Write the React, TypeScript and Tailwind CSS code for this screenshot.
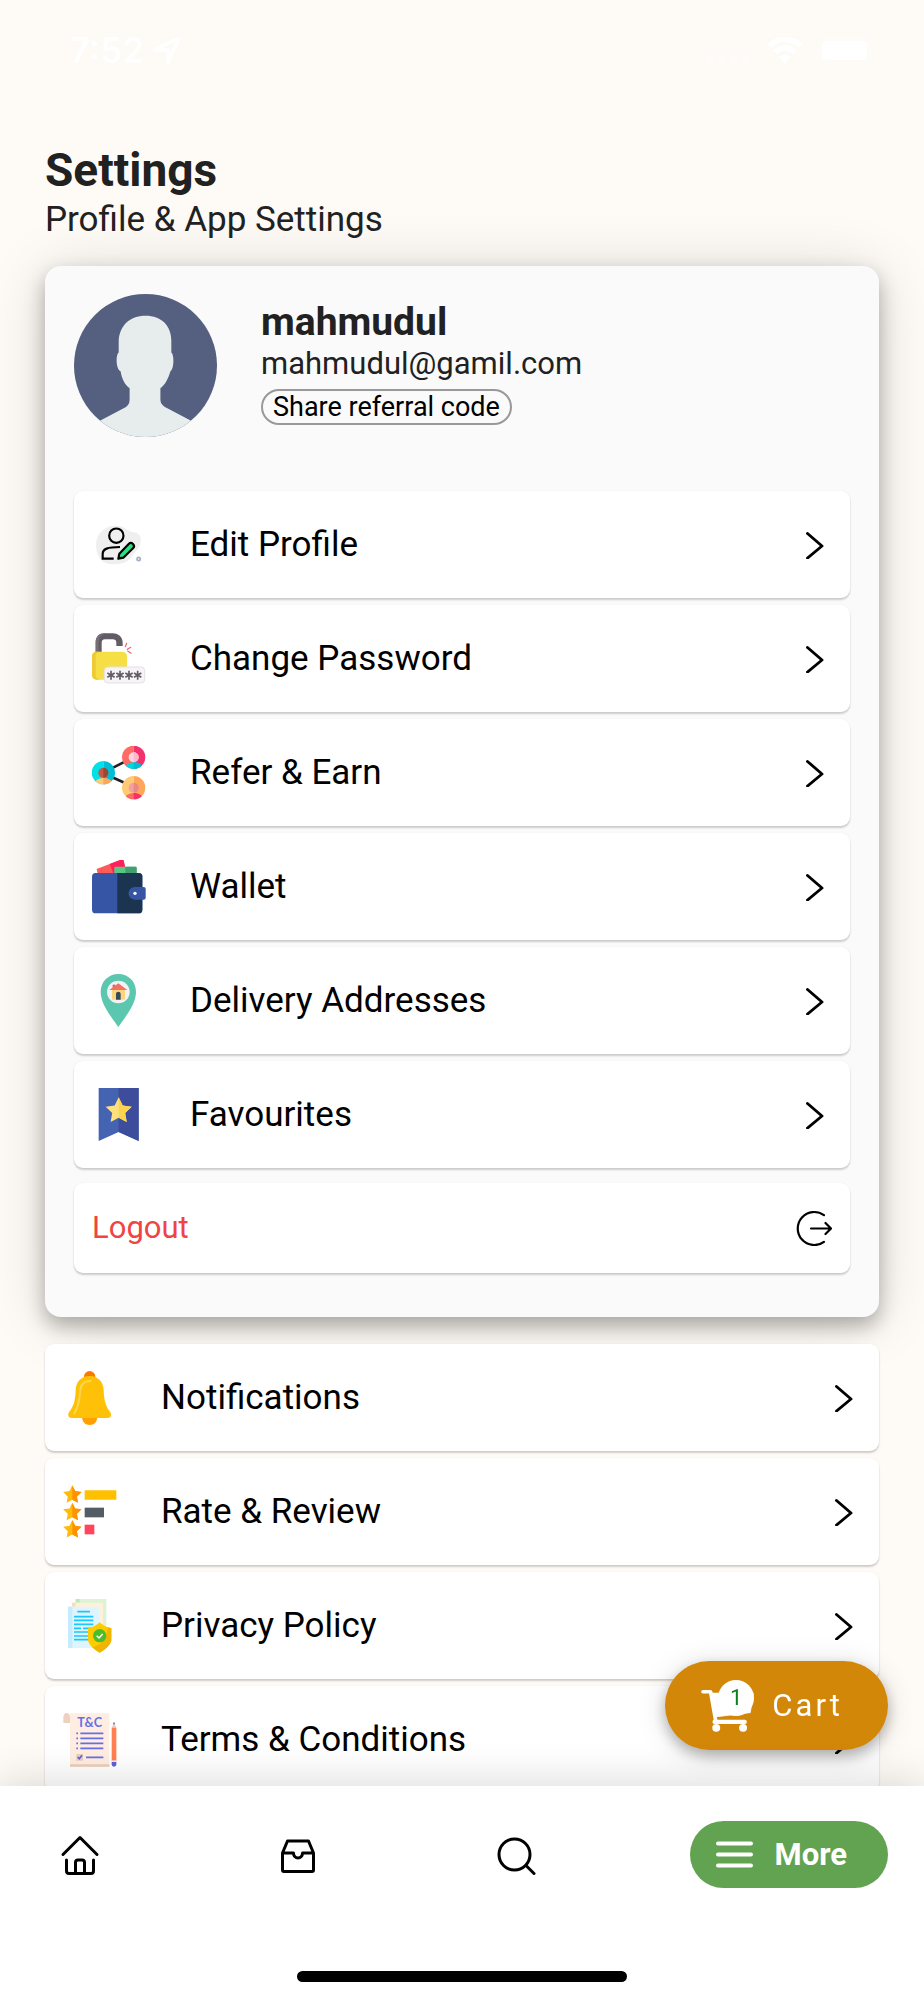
import type { ReactNode } from "react";

const star = (cx: number, cy: number, r: number, inner = 0.48) =>
  Array.from({ length: 10 }, (_, i) => {
    const a = (Math.PI / 5) * i - Math.PI / 2;
    const d = i % 2 === 0 ? r : r * inner;
    return `${(cx + d * Math.cos(a)).toFixed(1)},${(cy + d * Math.sin(a)).toFixed(1)}`;
  }).join(" ");

const rightHalf = (cx: number, cy: number, r: number, inner = 0.48) =>
  star(cx, cy, r, inner).split(" ").slice(0, 6).join(" ");

function Icon({ viewBox, children }: { viewBox: string; children: ReactNode }) {
  return (
    <svg viewBox={viewBox} className="size-[54px] shrink-0" fill="none" aria-hidden="true">
      {children}
    </svg>
  );
}

const EditProfileIcon = () => (
  <Icon viewBox="96 113 162 162">
    <path d="M108 196C107 160 136 134 170 136C196 137 198 152 222 156C242 159 246 176 240 194C234 212 222 216 214 230C202 248 182 252 160 252C126 252 109 230 108 196Z" fill="#efefef" />
    <circle cx="169" cy="166" r="21.500" stroke="#000" strokeWidth="6.500" />
    <path d="M161 235H128V221C128 206 142 200 180 200" stroke="#000" strokeWidth="6.500" />
    <path d="M175 235L178 220L206 191C210 187 215 187 219 191C223 195 223 200 219 204L190 232Z" fill="#2fdf84" stroke="#000" strokeWidth="6.500" strokeLinejoin="round" />
    <circle cx="236" cy="236" r="5" stroke="#a3b0c6" strokeWidth="5" />
  </Icon>
);

const PasswordIcon = () => (
  <Icon viewBox="96 455 162 162">
    <path d="M107 520V486C107 469 118 459 134 459H158C177 459 188 472 188 487V497H169V487C169 480 165 477 158 477H135C128 477 125 481 125 487V520Z" fill="#625c65" />
    <path d="M107 516V486C107 469 118 459 134 459H140C124 462 116 472 116 487V516Z" fill="#746e77" />
    <rect x="96" y="514" width="105" height="84" rx="14" fill="#f5df45" />
    <path d="M110 514H121C112 515 107 519 107 528V585C107 593 112 597 121 598H110C101 598 96 592 96 584V528C96 520 101 514 110 514Z" fill="#f0c936" />
    <path d="M200 489L196 499M212 501L202 507M203 512L213 519" stroke="#ef6470" strokeWidth="3.500" strokeLinecap="round" />
    <rect x="133" y="560" width="121" height="48" rx="11" fill="#f7f4f8" stroke="#e4e0e6" strokeWidth="3" />
    {[153, 180, 207, 233].map((x) => (
      <path key={x} d={`M${x} 571V598M${x - 11} 578L${x + 11} 591M${x + 11} 578L${x - 11} 591`} stroke="#625c65" strokeWidth="5" />
    ))}
  </Icon>
);

const ReferIcon = () => (
  <Icon viewBox="96 107 162 162">
    <defs>
      <clipPath id="refer-left"><circle cx="130" cy="187" r="35" /></clipPath>
      <clipPath id="refer-top"><circle cx="221" cy="141" r="35" /></clipPath>
      <clipPath id="refer-bottom"><circle cx="221" cy="232" r="35" /></clipPath>
    </defs>
    <path d="M155 174L195 154M155 200L195 218" stroke="#241f20" strokeWidth="8" />
    <g clipPath="url(#refer-left)">
      <path d="M95 150H130V224H95Z" fill="#00e1e8" />
      <path d="M130 150H166V224H130Z" fill="#00bed5" />
      <ellipse cx="130" cy="220" rx="27" ry="17" fill="#ffca75" />
      <path d="M130 203C145 203 157 211 157 220V237H130Z" fill="#ffa65a" />
      <circle cx="130" cy="187" r="15" fill="#c45a43" />
      <path d="M130 172A15 15 0 0 1 130 202Z" fill="#9a4836" />
    </g>
    <g clipPath="url(#refer-top)">
      <path d="M186 106H221V178H186Z" fill="#ff6a64" />
      <path d="M221 106H257V178H221Z" fill="#f2336b" />
      <ellipse cx="221" cy="174" rx="27" ry="18" fill="#00d5e0" />
      <path d="M221 156C236 156 248 165 248 174V192H221Z" fill="#00bed5" />
      <circle cx="221" cy="141" r="15" fill="#ffd5e0" />
      <path d="M221 126A15 15 0 0 1 221 156Z" fill="#ffb7cc" />
    </g>
    <g clipPath="url(#refer-bottom)">
      <path d="M186 196H221V268H186Z" fill="#ffca75" />
      <path d="M221 196H257V268H221Z" fill="#ffa65a" />
      <ellipse cx="221" cy="265" rx="27" ry="17" fill="#ff6a64" />
      <path d="M221 248C236 248 248 256 248 265V282H221Z" fill="#f2336b" />
      <circle cx="221" cy="232" r="15" fill="#f5a19b" />
      <path d="M221 217A15 15 0 0 1 221 247Z" fill="#ea8683" />
    </g>
  </Icon>
);

const WalletIcon = () => (
  <Icon viewBox="95 449 162 162">
    <path d="M109 476L182 448Q188 446 190 451L199 492H112Z" fill="#ff5a5a" />
    <path d="M148 461L182 448Q188 446 190 451L199 492H160Z" fill="#ff1f5a" />
    <path d="M162 492V472Q162 469 165 469H225Q229 469 229 473V492Z" fill="#57c785" />
    <path d="M195 469H225Q229 469 229 473V492H195Z" fill="#439f70" />
    <rect x="95" y="488" width="151" height="121" rx="11" fill="#3655a5" />
    <path d="M171 488H235Q246 488 246 499V598Q246 609 235 609H171Z" fill="#1b3450" />
    <path d="M225 530H250Q256 530 256 536V562Q256 568 250 568H225C198 568 198 530 225 530Z" fill="#3655a5" />
    <circle cx="224" cy="549" r="5" fill="#fff" />
  </Icon>
);

const AddressIcon = () => (
  <Icon viewBox="96 100 162 162">
    <path d="M175 259C160 236 122 193 122 154C122 122 146 100 175 100C205 100 228 122 228 154C228 193 190 236 175 259Z" fill="#5bc7ae" />
    <circle cx="175" cy="154" r="34" fill="#f0f2f3" />
    <path d="M158 132H166V143H158Z" fill="#e35d50" />
    <path d="M156 145H195V177H156Z" fill="#fbd57b" />
    <path d="M148 148L175 128L202 148Z" fill="#ef7267" />
    <path d="M168 177V160C168 151 182 151 182 160V177Z" fill="#34495e" />
  </Icon>
);

const FavouriteIcon = () => (
  <Icon viewBox="95 443 162 162">
    <path d="M115 441H235V602L175 575L115 602Z" fill="#4463b0" />
    <path d="M175 441H235V602L175 575Z" fill="#3d4c9b" />
    <polygon points={star(175, 512, 41, 0.5)} fill="#fde07f" />
    <polygon points={rightHalf(175, 512, 41, 0.5)} fill="#fdd44b" />
  </Icon>
);

const BellIcon = () => (
  <Icon viewBox="68 660 162 162">
    <circle cx="148" cy="677" r="17" fill="#f57c00" />
    <path d="M125 799H171C169 815 161 822 148 822C135 822 127 815 125 799Z" fill="#ff9f00" />
    <path d="M148 675C174 675 189 694 190 716C191 754 198 767 210 784C215 793 211 801 202 801H94C85 801 81 793 86 784C98 767 105 754 106 716C107 694 122 675 148 675Z" fill="#ffc107" />
    <path d="M150 690C130 690 120 703 119 722C118 749 112 770 102 787" stroke="#ffd54f" strokeWidth="6" strokeLinecap="round" />
  </Icon>
);

const RateIcon = () => (
  <Icon viewBox="68 134 162 162">
    {[164, 216, 268].map((y) => (
      <g key={y}>
        <polygon points={star(96, y, 29, 0.5)} fill="#ffbb0c" />
        <polygon points={rightHalf(96, y, 29, 0.5)} fill="#ff9102" />
      </g>
    ))}
    <path d="M133 150H228V178H133Z" fill="#ffc000" />
    <path d="M133 202H191V231H133Z" fill="#545d66" />
    <path d="M133 253H162V282H133Z" fill="#ff445d" />
  </Icon>
);

const PrivacyIcon = () => (
  <Icon viewBox="68 475 162 162">
    <path d="M106 475H198V600H106Z" fill="#dcf3d5" />
    <path d="M106 475H118V486H106Z" fill="#bfe9b3" />
    <path d="M95 486H188V611H95Z" fill="#fff0dc" />
    <path d="M95 486H106V498H95Z" fill="#ffdcb8" />
    <path d="M83 498H176V622H83Z" fill="#def5fd" />
    <path d="M83 498H96V622H83Z" fill="#c4ecfd" />
    <path d="M111 513H149M101 528H159M101 539H159M101 551H159M101 563H122M128 563H159M101 574H150M101 586H144M101 597H144" stroke="#1bc8fb" strokeWidth="5" />
    <path d="M178 545Q192 558 213 563V600Q207 620 178 636Q149 620 143 600V563Q164 558 178 545Z" fill="#ffcc00" />
    <path d="M213 563V600Q207 620 178 636Q165 629 156 620Q198 610 203 560Z" fill="#f0b500" />
    <circle cx="178" cy="585" r="20" fill="#4bbd27" />
    <path d="M169 585L176 592L187 580" stroke="#fff" strokeWidth="4.500" />
  </Icon>
);

const TermsIcon = () => (
  <Icon viewBox="68 156 162 162">
    <path d="M89 157H207V317H89Z" fill="#ffede1" />
    <path d="M89 310H207V317H89Z" fill="#ebcdba" />
    <path d="M69 186V169C69 152 89 152 89 169V186Z" fill="#edd0bf" />
    <text x="148" y="198" textAnchor="middle" fontSize="38" fontWeight="700" fontFamily="Lato, sans-serif" fill="#6670e6">T&amp;C</text>
    <path d="M120 217H189M120 232H189M120 247H189M120 262H189M137 289H189M108 217H113M108 232H113M108 247H113M108 262H113" stroke="#6670e6" strokeWidth="5" />
    <path d="M108 279H128V299H108Z" fill="#ebcdba" />
    <path d="M112 288L117 293L125 283" stroke="#5962dd" strokeWidth="5" />
    <path d="M214 200L221 183L228 200Z" fill="#edd0bf" />
    <path d="M218 190L221 182L224 190Z" fill="#4c53c6" />
    <path d="M214 200H228V300H214Z" fill="#ff7f50" />
    <path d="M214 298H228V303H214Z" fill="#e8e3ee" />
    <path d="M214 303H228V310Q228 317 221 317Q214 317 214 310Z" fill="#5961d6" />
  </Icon>
);

const profileItems = [
  { label: "Edit Profile", Glyph: EditProfileIcon },
  { label: "Change Password", Glyph: PasswordIcon },
  { label: "Refer & Earn", Glyph: ReferIcon },
  { label: "Wallet", Glyph: WalletIcon },
  { label: "Delivery Addresses", Glyph: AddressIcon },
  { label: "Favourites", Glyph: FavouriteIcon },
];

const appItems = [
  { label: "Notifications", Glyph: BellIcon },
  { label: "Rate & Review", Glyph: RateIcon },
  { label: "Privacy Policy", Glyph: PrivacyIcon },
  { label: "Terms & Conditions", Glyph: TermsIcon },
];

function MenuList({ items }: { items: { label: string; Glyph: () => ReactNode }[] }) {
  return (
    <ul className="flex flex-col gap-[7px]">
      {items.map(({ label, Glyph }) => (
        <li key={label}>
          <button
            type="button"
            className="flex h-[107px] w-full items-center gap-11 rounded-[9px] bg-white pr-[26px] pl-[18px] text-left text-[35px] leading-10 text-black shadow-[0_2px_2px_rgba(0,0,0,0.18),0_0_2px_rgba(0,0,0,0.06)]"
          >
            <Glyph />
            <span className="grow">{label}</span>
            <svg viewBox="0 0 18 28" className="h-7 w-[18px] shrink-0" fill="none" aria-hidden="true">
              <path d="M1.500 2.500L16 15L1.500 27" stroke="#000" strokeWidth="2.900" strokeLinecap="round" strokeLinejoin="round" />
            </svg>
          </button>
        </li>
      ))}
    </ul>
  );
}

function StatusBar() {
  return (
    <div className="flex h-[141px] items-start justify-between pt-[30px] pr-12 pl-[70px] text-white">
      <div className="flex items-center gap-2">
        <span className="font-[Inter,sans-serif] text-[35px] leading-10 font-semibold">7:52</span>
        <svg viewBox="0 0 30 30" className="size-[30px]" fill="none" aria-hidden="true">
          <path d="M2 15L27 3L16 28V15Z" stroke="currentColor" strokeWidth="3.500" strokeLinejoin="round" />
        </svg>
      </div>
      <div className="flex h-10 items-center gap-[15px]">
        <svg viewBox="0 0 46 10" className="mt-5 h-[10px] w-[46px] opacity-30" fill="currentColor" aria-hidden="true">
          <rect width="7" height="10" rx="2" />
          <rect x="12" width="7" height="10" rx="2" />
          <rect x="24" width="7" height="10" rx="2" />
          <rect x="36" width="7" height="10" rx="2" />
        </svg>
        <svg viewBox="0 0 36 27" className="h-[27px] w-9" fill="none" aria-hidden="true">
          <path d="M2 9Q18 -5 34 9M8 15.500Q18 6 28 15.500" stroke="currentColor" strokeWidth="5.500" />
          <path d="M12 20Q18 15 24 20L18 27Z" fill="currentColor" />
        </svg>
        <svg viewBox="0 0 58 27" className="h-[27px] w-[58px]" fill="none" aria-hidden="true">
          <rect x="1" y="1" width="51" height="25" rx="7" stroke="currentColor" strokeWidth="2" opacity=".4" />
          <rect x="4" y="4" width="45" height="19" rx="4" fill="currentColor" />
          <path d="M55 9Q58 13 55 18Z" fill="currentColor" opacity=".5" />
        </svg>
      </div>
    </div>
  );
}

function Avatar() {
  return (
    <svg viewBox="0 0 144 144" className="size-[143px] shrink-0" role="img" aria-label="Profile photo">
      <defs>
        <clipPath id="avatar-circle"><circle cx="72" cy="72" r="72" /></clipPath>
      </defs>
      <g clipPath="url(#avatar-circle)">
        <path d="M0 0H144V144H0Z" fill="#556080" />
        <path d="M72 22C88 22 98 32 98 47V59C101 61 101 76 97 78C95 85 92 91 87 95V106C87 111 90 113 94 115L126 132V144H18V132L50 115C54 113 56 111 56 106V95C51 91 48 85 47 78C42 76 42 61 45 59V47C46 32 56 22 72 22Z" fill="#e7eced" />
      </g>
    </svg>
  );
}

function CartButton() {
  return (
    <button
      type="button"
      aria-label="Cart, 1 item"
      className="fixed right-9 bottom-[250px] flex h-[89px] items-center gap-[18px] rounded-full bg-[#d28709] pr-[45px] pl-9 text-white shadow-[0_6px_14px_rgba(0,0,0,0.26),0_4px_30px_rgba(0,0,0,0.14)]"
    >
      <span className="relative flex">
        <svg viewBox="245 232 160 156" className="h-[52px] w-[53px]" fill="none" aria-hidden="true">
          <path d="M251 267H274L290 358" stroke="#fff" strokeWidth="11" strokeLinecap="round" strokeLinejoin="round" />
          <path d="M276 271H403L394 330L288 343Z" fill="#fff" stroke="#fff" strokeWidth="2" strokeLinejoin="round" />
          <path d="M286 358H377" stroke="#fff" strokeWidth="13" strokeLinecap="round" />
          <circle cx="291" cy="376" r="12" fill="#fff" />
          <circle cx="372" cy="376" r="12" fill="#fff" />
        </svg>
        <span className="absolute top-0 right-0 flex size-9 items-center justify-center rounded-full bg-white text-[22px] leading-6 text-[#0b8022]">
          1
        </span>
      </span>
      <span className="text-[31px] leading-9 tracking-widest">Cart</span>
    </button>
  );
}

function BottomNav() {
  const tab = "flex h-[67px] w-[88px] items-center justify-center";
  const glyph = { viewBox: "0 0 40 40", className: "size-10", fill: "none", stroke: "#000", strokeWidth: 3, strokeLinecap: "round", strokeLinejoin: "round" } as const;
  return (
    <nav className="fixed inset-x-0 bottom-0 bg-white shadow-[0_-4px_40px_rgba(0,0,0,0.14)]">
      <div className="flex items-center justify-between px-9 pt-[35px]">
        <a href="#home" aria-label="Home" className={tab}>
          <svg {...glyph}>
            <path d="M3 19.500L20 2.500L37 19.500M6.500 25V36Q6.500 38.500 9 38.500H31Q33.500 38.500 33.500 36V25M15.500 38V27.500Q15.500 25 18 25H22Q24.500 25 24.500 27.500V38" />
          </svg>
        </a>
        <a href="#orders" aria-label="Orders" className={tab}>
          <svg {...glyph}>
            <path d="M9.500 6H30.500L35.500 18V35Q35.500 36.500 34 36.500H6Q4.500 36.500 4.500 35V18ZM4.500 18H15.500C15.500 24.500 24.500 24.500 24.500 18H35.500" />
          </svg>
        </a>
        <a href="#search" aria-label="Search" className={tab}>
          <svg {...glyph}>
            <circle cx="18.500" cy="19.500" r="15.500" />
            <path d="M30 30.500L38 38.500" />
          </svg>
        </a>
        <button type="button" className="flex h-[67px] items-center gap-[22px] rounded-full bg-[#61a351] pr-[41px] pl-[26px] text-[31px] leading-9 font-bold text-white">
          <svg viewBox="0 0 37 27" className="h-[27px] w-[37px]" fill="none" aria-hidden="true">
            <path d="M2 2.500H35M2 13.500H35M2 24.500H35" stroke="#fff" strokeWidth="4" strokeLinecap="round" />
          </svg>
          More
        </button>
      </div>
      <div className="mx-auto mt-[83px] mb-[18px] h-[11px] w-[330px] rounded-full bg-black" />
    </nav>
  );
}

export default function App() {
  return (
    <div className="min-h-screen bg-[#fefaf5] font-[Roboto,sans-serif]">
      <StatusBar />
      <main className="px-[45px] pb-[200px]">
        <header className="text-[#212121]">
          <h1 className="text-[46px] leading-[58px] font-bold">Settings</h1>
          <p className="text-[35px] leading-[42px]">Profile &amp; App Settings</p>
        </header>

        <section className="mt-[25px] rounded-[16px] bg-[#fafafa] px-[29px] pt-7 pb-11 shadow-[0_9px_20px_rgba(0,0,0,0.28),0_4px_60px_rgba(0,0,0,0.14)]">
          <div className="flex gap-11">
            <Avatar />
            <div className="flex flex-col items-start pt-1 text-[#212121]">
              <h2 className="text-[39px] leading-[48px] font-bold">mahmudul</h2>
              <p className="text-[31px] leading-9">mahmudul@gamil.com</p>
              <button type="button" className="mt-[7px] flex h-9 items-center rounded-full border-2 border-[#999] px-[10px] text-[27px] leading-8 text-black">
                Share referral code
              </button>
            </div>
          </div>
          <div className="mt-[54px]">
            <MenuList items={profileItems} />
          </div>
          <button
            type="button"
            className="mt-[15px] flex h-[90px] w-full items-center justify-between rounded-[9px] bg-white px-[18px] text-[31px] leading-9 text-[#ef4444] shadow-[0_2px_2px_rgba(0,0,0,0.18),0_0_2px_rgba(0,0,0,0.06)]"
          >
            Logout
            <svg viewBox="0 0 36 36" className="size-9" fill="none" stroke="#000" strokeWidth="2.200" strokeLinecap="round" strokeLinejoin="round" aria-hidden="true">
              <path d="M28 5.200A16.500 16.500 0 1 0 28 31.800M15 18.500H35M29.500 13L35 18.500L29.500 24" />
            </svg>
          </button>
        </section>

        <div className="relative mt-[27px]">
          <MenuList items={appItems} />
        </div>
      </main>
      <CartButton />
      <BottomNav />
    </div>
  );
}
